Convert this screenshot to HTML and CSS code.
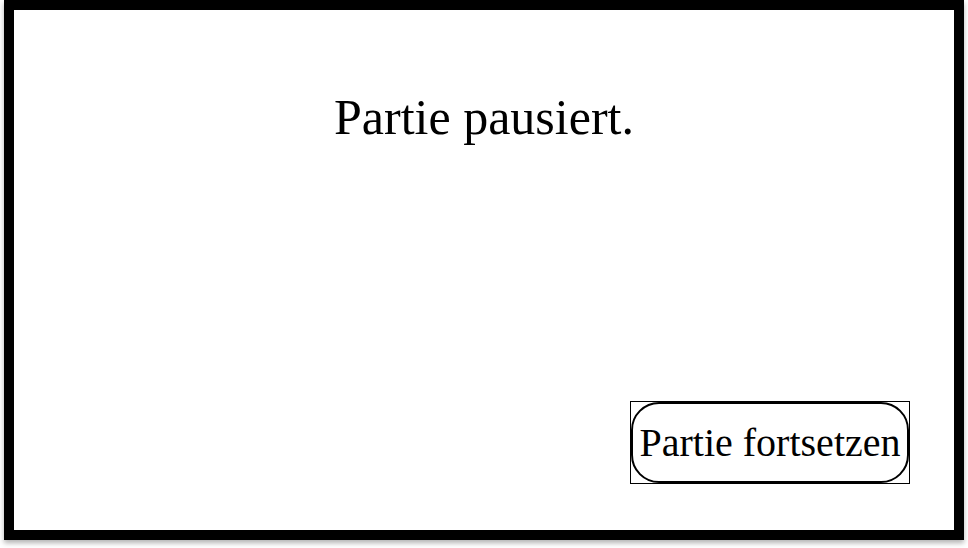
FILE: index.html
```html
<!DOCTYPE html>
<html lang="de">
<head>
<meta charset="utf-8">
<title>Partie pausiert</title>
<link rel="stylesheet" href="styles.css">
</head>
<body>
<div class="frame">
  <h1 class="title">Partie pausiert.</h1>
  <div class="actions">
    <button class="resume" type="button"><span class="resume-inner">Partie fortsetzen</span></button>
  </div>
</div>
</body>
</html>
```

FILE: styles.css
```css
html, body {
  margin: 0;
  padding: 0;
  background: #ffffff;
}

body {
  font-family: "Liberation Serif", "Times New Roman", serif;
  color: #000000;
  width: 968px;
  height: 548px;
  overflow: hidden;
}

.frame {
  box-sizing: border-box;
  width: 960px;
  height: 540px;
  margin: 0 auto;
  border: 10px solid #000000;
  background: #ffffff;
  box-shadow: 0 3px 5px rgba(0, 0, 0, 0.3);
  display: flex;
  flex-direction: column;
}

.title {
  margin: 78px 0 0 0;
  font-size: 50px;
  font-weight: normal;
  text-align: center;
  line-height: normal;
}

.actions {
  margin-top: auto;
  display: flex;
  justify-content: flex-end;
  padding: 0 44px 46px 0;
}

.resume {
  box-sizing: border-box;
  width: 280px;
  height: 83px;
  padding: 0;
  margin: 0;
  border: 1px solid #000000;
  background: #ffffff;
  font: inherit;
  color: inherit;
  display: flex;
}

.resume-inner {
  box-sizing: border-box;
  flex: 1;
  border: 2px solid #000000;
  border-radius: 28px;
  display: flex;
  align-items: center;
  justify-content: center;
  font-size: 40px;
  line-height: normal;
  white-space: nowrap;
}
```
